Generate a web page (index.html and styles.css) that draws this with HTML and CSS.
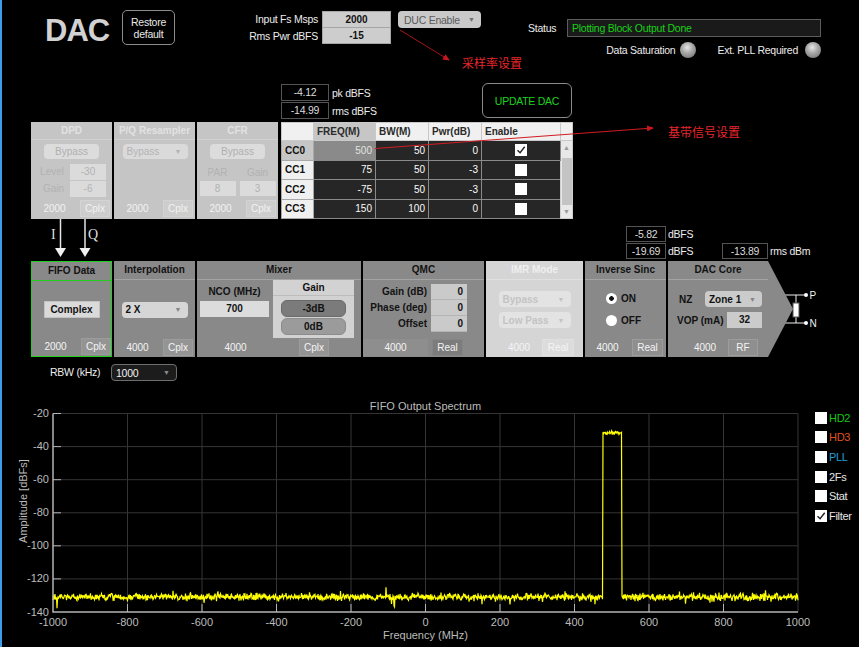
FILE: index.html
```html
<!DOCTYPE html>
<html lang="zh">
<head>
  <meta charset="UTF-8">
  <title>DAC</title>
  <link rel="stylesheet" href="styles.css">
</head>
<body>
  <!-- 顶部：标题、采样率、状态 -->
  <div class="top">
    <div class="title">DAC</div>
    <div class="restore">Restore<br>default</div>
    <div class="fs-group">
      <span class="lbl">Input Fs Msps</span>
      <span class="num-box">2000</span>
      <span class="lbl">Rms Pwr dBFS</span>
      <span class="num-box second">-15</span>
    </div>
    <div class="select duc"><span>DUC Enable</span><span class="caret">&#9660;</span></div>
    <div class="status-area">
      <div class="status-row">
        <span class="status-lbl">Status</span>
        <div class="status-box">Plotting Block Output Done</div>
      </div>
      <div class="led-row">
        <span>Data Saturation</span><span class="led"></span>
        <span class="led-lbl">Ext. PLL Required</span><span class="led last"></span>
      </div>
    </div>
  </div>

  <!-- 峰值 / 均方根 -->
  <div class="meas-top">
    <div class="pk">
      <span class="vbox">-4.12</span><span>pk dBFS</span>
      <span class="vbox">-14.99</span><span>rms dBFS</span>
    </div>
    <div class="update">UPDATE DAC</div>
  </div>

  <!-- 上排：DPD / 重采样 / CFR + 载波表 -->
  <div class="upper">
    <div class="blk dis">
      <div class="hd">DPD</div>
      <div class="bd">
        <div class="btn-dis">Bypass</div>
        <div class="lg-grid">
          <span class="r">Level</span><span class="inp-dis">-30</span>
          <span class="r">Gain</span><span class="inp-dis">-6</span>
        </div>
      </div>
      <div class="ft"><span class="a">2000</span><span class="b">Cplx</span></div>
    </div>
    <div class="blk dis">
      <div class="hd">P/Q Resampler</div>
      <div class="bd">
        <div class="select pq"><span>Bypass</span><span class="caret">&#9660;</span></div>
      </div>
      <div class="ft"><span class="a">2000</span><span class="b">Cplx</span></div>
    </div>
    <div class="blk dis">
      <div class="hd">CFR</div>
      <div class="bd">
        <div class="btn-dis">Bypass</div>
        <div class="pg-grid">
          <span>PAR</span><span>Gain</span>
          <span class="inp-dis">8</span><span class="inp-dis">3</span>
        </div>
      </div>
      <div class="ft"><span class="a">2000</span><span class="b">Cplx</span></div>
    </div>

    <table class="cc">
      <colgroup>
        <col class="w-rh"><col class="w-freq"><col class="w-bw"><col class="w-pwr"><col class="w-en"><col class="w-sb">
      </colgroup>
      <tr class="hrow"><th></th><th class="sel">FREQ(M)</th><th>BW(M)</th><th>Pwr(dB)</th><th>Enable</th><th></th></tr>
      <tr>
        <th class="rh sel">CC0</th><td class="fsel">500</td><td>50</td><td>0</td>
        <td class="en"><span class="chk"><svg width="12" height="12" viewBox="0 0 12 12"><path d="M2.5 6.2l2.6 2.6 4.6-6" fill="none" stroke="#222" stroke-width="1.4"/></svg></span></td>
        <td class="scroll" rowspan="4">
          <div class="scroll-in"><span class="up">&#9650;</span><span class="thumb"></span><span class="dn">&#9660;</span></div>
        </td>
      </tr>
      <tr><th class="rh">CC1</th><td>75</td><td>50</td><td>-3</td><td class="en"><span class="chk"></span></td></tr>
      <tr><th class="rh">CC2</th><td>-75</td><td>50</td><td>-3</td><td class="en"><span class="chk"></span></td></tr>
      <tr><th class="rh">CC3</th><td>150</td><td>100</td><td>0</td><td class="en"><span class="chk"></span></td></tr>
    </table>
  </div>

  <!-- I/Q 箭头与输出功率 -->
  <div class="iq-row">
    <svg class="iq" width="81" height="42" viewBox="0 0 81 42">
      <line x1="29.5" y1="0" x2="29.5" y2="30" stroke="#e4e4e4" stroke-width="1.5"/>
      <polygon points="24,29 35,29 29.5,38" fill="#f0f0f0"/>
      <line x1="54" y1="0" x2="54" y2="30" stroke="#e4e4e4" stroke-width="1.5"/>
      <polygon points="48.5,29 59.5,29 54,38" fill="#f0f0f0"/>
      <text x="20" y="20">I</text>
      <text x="57" y="20">Q</text>
    </svg>
    <div class="side-meas">
      <span class="vbox">-5.82</span><span>dBFS</span><span></span><span></span>
      <span class="vbox">-19.69</span><span>dBFS</span><span class="vbox">-13.89</span><span>rms dBm</span>
    </div>
  </div>

  <!-- 信号链 -->
  <div class="chain">
    <div class="blk fifo">
      <div class="hd">FIFO Data</div>
      <div class="bd"><div class="btn-lt">Complex</div></div>
      <div class="ft"><span class="a">2000</span><span class="b">Cplx</span></div>
    </div>
    <div class="blk">
      <div class="hd">Interpolation</div>
      <div class="bd"><div class="select interp"><span>2 X</span><span class="caret">&#9660;</span></div></div>
      <div class="ft"><span class="a">4000</span><span class="b">Cplx</span></div>
    </div>
    <div class="blk mixer">
      <div class="hd">Mixer</div>
      <div class="bd">
        <div class="nco">
          <span class="nco-lbl">NCO (MHz)</span>
          <span class="inp-lt">700</span>
        </div>
        <div class="gain">
          <div class="gain-hd">Gain</div>
          <div class="pill dark">-3dB</div>
          <div class="pill">0dB</div>
        </div>
      </div>
      <div class="ft"><span class="a">4000</span><span class="b">Cplx</span></div>
    </div>
    <div class="blk qmc">
      <div class="hd">QMC</div>
      <div class="bd">
        <span class="q-lbl">Gain (dB)</span><span class="q-inp">0</span>
        <span class="q-lbl">Phase (deg)</span><span class="q-inp">0</span>
        <span class="q-lbl">Offset</span><span class="q-inp">0</span>
      </div>
      <div class="ft"><span class="a">4000</span><span class="b">Real</span></div>
    </div>
    <div class="blk imr">
      <div class="hd">IMR Mode</div>
      <div class="bd">
        <div class="select imr-sel"><span>Bypass</span><span class="caret">&#9660;</span></div>
        <div class="select imr-sel"><span>Low Pass</span><span class="caret">&#9660;</span></div>
      </div>
      <div class="ft"><span class="a">4000</span><span class="b">Real</span></div>
    </div>
    <div class="blk sinc">
      <div class="hd">Inverse Sinc</div>
      <div class="bd">
        <div class="radios">
          <div class="radio-row"><span class="radio on"></span>ON</div>
          <div class="radio-row"><span class="radio"></span>OFF</div>
        </div>
      </div>
      <div class="ft"><span class="a">4000</span><span class="b">Real</span></div>
    </div>
    <div class="blk core">
      <div class="hd">DAC Core</div>
      <div class="bd">
        <div class="core-row"><span class="nz">NZ</span><div class="select zone"><span>Zone 1</span><span class="caret">&#9660;</span></div></div>
        <div class="core-row"><span>VOP (mA)</span><span class="inp-lt vop">32</span></div>
      </div>
      <div class="ft"><span class="a">4000</span><span class="b">RF</span></div>
    </div>
    <svg class="load" width="40" height="96" viewBox="0 0 40 96">
      <path d="M0 34H21M0 62H21M11 34V62" stroke="#f0f0f0" stroke-width="1" fill="none"/>
      <rect x="8" y="42" width="6" height="14" fill="#fff" stroke="#555" stroke-width="1"/>
      <circle cx="21" cy="34" r="2" fill="#fff"/>
      <circle cx="21" cy="62" r="2" fill="#fff"/>
      <text x="24.5" y="38">P</text>
      <text x="24.5" y="66">N</text>
    </svg>
  </div>

  <!-- RBW -->
  <div class="rbw">
    <span class="rbw-lbl">RBW (kHz)</span>
    <div class="select sel-dark"><span>1000</span><span class="caret">&#9660;</span></div>
  </div>

  <!-- 频谱图 -->
  <div class="chart">
    <svg class="plot" width="815" height="249" viewBox="0 398 815 249">
      <text class="p-title" x="425.5" y="410">FIFO Output Spectrum</text>
      <path class="grid" d="M53 413.5H798M53 446.6H798M53 479.7H798M53 512.8H798M53 545.8H798M53 578.9H798M127.5 413.5V612M202 413.5V612M276.5 413.5V612M351 413.5V612M425.5 413.5V612M500 413.5V612M574.5 413.5V612M649 413.5V612M723.5 413.5V612M798 413.5V612"/>
      <polyline id="trace" class="trace" points=""/>
      <path class="axis" d="M53 413.5V612H798"/>
      <path class="ticks" d="M53 413.5h8M53 446.6h8M53 479.7h8M53 512.8h8M53 545.8h8M53 578.9h8M127.5 612v-8M202 612v-8M276.5 612v-8M351 612v-8M425.5 612v-8M500 612v-8M574.5 612v-8M649 612v-8M723.5 612v-8"/>
      <g class="ylab">
        <text x="49" y="417">-20</text>
        <text x="49" y="450.1">-40</text>
        <text x="49" y="483.2">-60</text>
        <text x="49" y="516.3">-80</text>
        <text x="49" y="549.3">-100</text>
        <text x="49" y="582.4">-120</text>
        <text x="49" y="615.5">-140</text>
      </g>
      <g class="xlab">
        <text x="53" y="626">-1000</text>
        <text x="127.5" y="626">-800</text>
        <text x="202" y="626">-600</text>
        <text x="276.5" y="626">-400</text>
        <text x="351" y="626">-200</text>
        <text x="425.5" y="626">0</text>
        <text x="500" y="626">200</text>
        <text x="574.5" y="626">400</text>
        <text x="649" y="626">600</text>
        <text x="723.5" y="626">800</text>
        <text x="798" y="626">1000</text>
      </g>
      <text class="ax-t" x="425.5" y="639">Frequency (MHz)</text>
      <text class="ax-t" x="27" y="501" transform="rotate(-90 27 501)">Amplitude [dBFs]</text>
    </svg>
    <div class="legend">
      <div class="lg"><span class="box"></span><span class="c-hd2">HD2</span></div>
      <div class="lg"><span class="box"></span><span class="c-hd3">HD3</span></div>
      <div class="lg"><span class="box"></span><span class="c-pll">PLL</span></div>
      <div class="lg"><span class="box"></span><span>2Fs</span></div>
      <div class="lg"><span class="box"></span><span>Stat</span></div>
      <div class="lg"><span class="box"><svg width="12" height="12" viewBox="0 0 12 12"><path d="M2.5 6.2l2.6 2.6 4.6-6" fill="none" stroke="#222" stroke-width="1.4"/></svg></span><span>Filter</span></div>
    </div>
  </div>

  <!-- 标注 -->
  <svg class="notes" width="859" height="647" viewBox="0 0 859 647">
    <defs>
      <marker id="ah" markerWidth="7" markerHeight="6" refX="6" refY="3" orient="auto">
        <path d="M0 0L7 3L0 6z" fill="#c8161c"/>
      </marker>
    </defs>
    <line x1="400" y1="30" x2="449" y2="60" stroke="#a81418" stroke-width="1" marker-end="url(#ah)"/>
    <line x1="375" y1="148.5" x2="653" y2="128" stroke="#d01c22" stroke-width="1" marker-end="url(#ah)"/>
  </svg>
  <span class="note n1">采样率设置</span>
  <span class="note n2">基带信号设置</span>

  <script src="script.js"></script>
</body>
</html>
```

FILE: styles.css
```css
/* 基础 */
* {
  box-sizing: border-box;
}
html, body {
  margin: 0;
  padding: 0;
}
body {
  position: relative;
  width: 859px;
  height: 647px;
  overflow: hidden;
  background: #000;
  box-shadow: inset 2px 0 0 #3d9de8;
  color: #ececec;
  font-family: "Liberation Sans", Arial, sans-serif;
  font-size: 10.5px;
  letter-spacing: -0.25px;
}

/* 顶部 */
.top {
  display: flex;
  align-items: flex-start;
  height: 83px;
}
.title {
  width: 77px;
  margin: 15px 0 0 45px;
  font-size: 31px;
  line-height: 31px;
  font-weight: bold;
  color: #d2d2d2;
  letter-spacing: -1px;
}
.restore {
  width: 53px;
  height: 35px;
  margin-top: 10px;
  border: 1px solid #8c8c8c;
  border-radius: 5px;
  display: flex;
  align-items: center;
  justify-content: center;
  text-align: center;
  line-height: 12px;
  color: #e8e8e8;
}
.fs-group {
  display: grid;
  grid-template-columns: 80px 69px;
  grid-template-rows: 17px 16px;
  column-gap: 4px;
  margin: 11px 0 0 63px;
}
.fs-group .lbl {
  text-align: right;
  line-height: 17px;
}
.num-box {
  background: #cdcdcd;
  border: 1px solid #a6a6a6;
  color: #111;
  font-size: 10px;
  font-weight: bold;
  letter-spacing: 0;
  text-align: center;
  line-height: 15px;
}
.num-box.second {
  border-top: none;
}

/* 下拉框 */
.select {
  display: flex;
  justify-content: space-between;
  align-items: center;
  border-radius: 4px;
  padding: 0 6px 0 4px;
}
.caret {
  font-size: 7px;
  letter-spacing: 0;
}
.duc {
  width: 83px;
  height: 17px;
  margin: 11px 0 0 7px;
  padding-left: 6px;
  background: #c9c9c9;
  color: #5a5a5a;
}
.duc .caret {
  color: #6e6e6e;
}

/* 状态 */
.status-area {
  width: 293px;
  margin: 19px 0 0 47px;
}
.status-row {
  display: flex;
  align-items: center;
  height: 18px;
}
.status-lbl {
  width: 39px;
}
.status-box {
  width: 254px;
  height: 18px;
  padding-left: 4px;
  background: #1a1a1a;
  border: 1px solid #5c5c5c;
  color: #18d018;
  line-height: 16px;
}
.led-row {
  display: flex;
  align-items: center;
  justify-content: flex-end;
  height: 16px;
  margin-top: 5px;
}
.led {
  width: 16px;
  height: 16px;
  margin-left: 5px;
  border-radius: 50%;
  background: radial-gradient(circle at 45% 35%, #e6e6e6 0, #a9a9a9 40%, #666 100%);
}
.led.last {
  margin-left: 7px;
}
.led-lbl {
  margin-left: 21px;
}

/* 峰值 / 均方根 */
.meas-top {
  display: flex;
  height: 39px;
  padding-left: 281px;
}
.pk {
  width: 201px;
  padding-top: 1px;
  display: grid;
  grid-template-columns: 48px auto;
  grid-template-rows: 17px 17px;
  row-gap: 1px;
  column-gap: 3px;
  align-items: center;
  align-content: start;
}
.vbox {
  height: 17px;
  border: 1px solid #545454;
  color: #dcdcdc;
  text-align: center;
  line-height: 15px;
}
.update {
  width: 90px;
  height: 35px;
  border: 1px solid #8a8a8a;
  border-radius: 6px;
  display: flex;
  align-items: center;
  justify-content: center;
  color: #1ed21e;
}

/* 模块 */
.upper {
  display: flex;
  gap: 2px;
  height: 97px;
  padding-left: 31px;
}
.chain {
  display: flex;
  gap: 2px;
  height: 96px;
  padding-left: 31px;
}
.blk {
  width: 81px;
  display: flex;
  flex-direction: column;
  background: #898989;
  color: #121212;
  font-size: 10px;
  letter-spacing: 0;
}
.blk .hd {
  height: 19px;
  line-height: 18px;
  text-align: center;
  font-weight: bold;
  border-bottom: 1px solid #a3a3a3;
}
.blk .bd {
  flex: 1;
  display: flex;
  flex-direction: column;
  align-items: center;
  justify-content: center;
}
.blk .ft {
  display: flex;
  height: 17px;
  margin-bottom: 1px;
  color: #f4f4f4;
}
.ft span {
  text-align: center;
  line-height: 17px;
}
.ft .a {
  width: 47px;
}
.ft .b {
  width: 30px;
  margin-left: 2px;
  line-height: 15px;
  background: #949494;
  border: 1px solid #9c9c9c;
}

/* 上排（禁用） */
.dis {
  background: #c5c5c5;
  color: #b2b2b2;
}
.dis .hd {
  height: 18px;
  line-height: 17px;
  color: #e2e2e2;
  border-bottom-color: #d0d0d0;
}
.dis .bd {
  justify-content: flex-start;
  padding-top: 4px;
}
.dis .ft {
  margin-bottom: 2px;
  color: #f2f2f2;
}
.dis .ft .b {
  background: #cdcdcd;
  border-color: #d3d3d3;
}
.btn-dis {
  width: 55px;
  height: 15px;
  line-height: 15px;
  border-radius: 4px;
  background: #dcdcdc;
  color: #b0b0b0;
  text-align: center;
}
.lg-grid {
  align-self: flex-start;
  display: grid;
  grid-template-columns: 33px 36px;
  grid-auto-rows: 16px;
  column-gap: 6px;
  row-gap: 1px;
  margin-top: 5px;
  line-height: 16px;
}
.r {
  text-align: right;
}
.inp-dis {
  background: #dbdbdb;
  text-align: center;
}
.pg-grid {
  display: grid;
  grid-template-columns: 36px 36px;
  grid-template-rows: 17px 15px;
  column-gap: 4px;
  margin-top: 5px;
  text-align: center;
  line-height: 17px;
}
.pg-grid .inp-dis {
  line-height: 15px;
}
.pq {
  width: 65px;
  height: 15px;
  margin-left: 1px;
  background: #dadada;
  color: #b3b3b3;
}

/* 载波表 */
.cc {
  width: 291px;
  height: 97px;
  margin-left: 1px;
  border-collapse: collapse;
  table-layout: fixed;
  background: #262626;
  border: 1px solid #d6d6d6;
  font-size: 10px;
  letter-spacing: 0;
}
.w-rh { width: 32px; }
.w-freq { width: 62px; }
.w-bw { width: 53px; }
.w-pwr { width: 53px; }
.w-en { width: 79px; }
.w-sb { width: 12px; }
.cc th, .cc td {
  padding: 0 3px;
  border: 1px solid #8a8a8a;
  white-space: nowrap;
}
.cc .hrow th {
  height: 18px;
  background: #f0f0f0;
  color: #2a2a2a;
  text-align: left;
  border-color: #c9c9c9;
}
.cc .hrow th.sel {
  background: #c6c6c6;
}
.cc .rh {
  background: #f0f0f0;
  color: #111;
  text-align: left;
  border-color: #a8a8a8;
}
.cc .rh.sel {
  background: #c6c6c6;
}
.cc td {
  color: #fafafa;
  text-align: right;
}
.cc td.fsel {
  background: #8a8a8a;
  color: #e2e2e2;
}
.cc td.en {
  text-align: center;
}
.cc td.scroll {
  padding: 0;
  background: #e8e8e8;
  border-color: #cfcfcf;
  vertical-align: top;
}
.scroll-in {
  height: 77px;
  display: flex;
  flex-direction: column;
  align-items: center;
  color: #9a9a9a;
  font-size: 7px;
}
.scroll-in .up {
  height: 17px;
  line-height: 14px;
}
.scroll-in .thumb {
  flex: 1;
  width: 10px;
  background: #c4c4c4;
}
.scroll-in .dn {
  height: 13px;
  line-height: 13px;
}
.chk {
  display: inline-block;
  width: 12px;
  height: 12px;
  background: #fff;
  vertical-align: middle;
}
.chk svg {
  display: block;
}

/* I/Q 与输出功率 */
.iq-row {
  display: flex;
  height: 42px;
  padding-left: 31px;
}
.iq text {
  font-family: "Liberation Serif", "Times New Roman", serif;
  font-size: 14px;
  fill: #dedede;
}
.side-meas {
  display: grid;
  grid-template-columns: 40px 52px 46px auto;
  grid-template-rows: 16px 16px;
  column-gap: 2px;
  row-gap: 1px;
  margin: 7px 0 0 514px;
  align-items: center;
}
.side-meas .vbox {
  height: 16px;
  line-height: 14px;
}

/* 信号链 */
.fifo {
  border: 1px solid #1fd01f;
}
.fifo .hd {
  border-bottom-color: #1fd01f;
}
.btn-lt {
  width: 56px;
  height: 17px;
  line-height: 15px;
  background: #dadada;
  border: 1px solid #c2c2c2;
  font-weight: bold;
  text-align: center;
}
.interp {
  width: 66px;
  height: 16px;
  background: #d6d6d6;
  font-weight: bold;
}
.interp .caret, .zone .caret {
  color: #858585;
}
.mixer {
  width: 164px;
}
.mixer .bd {
  flex-direction: row;
  align-items: flex-start;
  justify-content: flex-start;
  padding-left: 3px;
}
.nco {
  width: 69px;
  display: flex;
  flex-direction: column;
  align-items: center;
}
.nco-lbl {
  margin-top: 6px;
  line-height: 12px;
  font-weight: bold;
}
.inp-lt {
  height: 16px;
  line-height: 16px;
  background: #dcdcdc;
  font-weight: bold;
  text-align: center;
}
.nco .inp-lt {
  width: 69px;
  margin-top: 3px;
}
.gain {
  width: 81px;
  height: 58px;
  margin-left: 4px;
  background: #d2d2d2;
  display: flex;
  flex-direction: column;
  align-items: center;
}
.gain-hd {
  width: 100%;
  height: 16px;
  line-height: 15px;
  text-align: center;
  font-weight: bold;
  border-bottom: 1px solid #bcbcbc;
}
.pill {
  width: 65px;
  height: 17px;
  margin-top: 1px;
  line-height: 15px;
  border-radius: 6px;
  background: #9b9b9b;
  border: 1px solid #8c8c8c;
  text-align: center;
  font-weight: bold;
}
.pill.dark {
  margin-top: 4px;
  background: #7b7b7b;
  border-color: #6a6a6a;
}
.mixer .ft {
  padding-left: 16px;
}
.mixer .ft .a {
  width: 45px;
}
.mixer .ft .b {
  margin-left: 41px;
}
.qmc {
  width: 121px;
}
.qmc .bd {
  display: grid;
  grid-template-columns: 64px 36px;
  column-gap: 4px;
  align-content: start;
  justify-content: start;
  padding-top: 4px;
}
.q-lbl {
  text-align: right;
  font-weight: bold;
  line-height: 16px;
}
.q-inp {
  height: 16px;
  padding-right: 4px;
  line-height: 16px;
  background: #cacaca;
  border-bottom: 1px solid #b4b4b4;
  text-align: right;
  font-weight: bold;
}
.qmc .ft .a {
  width: 65px;
  background: #8e8e8e;
}
.qmc .ft .b {
  width: 31px;
  margin-left: 4px;
  background: #7c7c7c;
  border-color: #858585;
}
.imr {
  width: 97px;
  background: #d5d5d5;
}
.imr .hd {
  color: #efefef;
  border-bottom-color: #e0e0e0;
}
.imr-sel {
  width: 72px;
  height: 16px;
  background: #e3e3e3;
  color: #c3c3c3;
  font-weight: bold;
}
.imr-sel + .imr-sel {
  margin-top: 5px;
}
.imr .ft {
  padding-left: 11px;
}
.imr .ft .a {
  width: 44px;
}
.imr .ft .b {
  width: 32px;
  margin-left: 1px;
  background: #dcdcdc;
  border-color: #e0e0e0;
}
.radios {
  display: flex;
  flex-direction: column;
  margin-right: 4px;
}
.radio-row {
  display: flex;
  align-items: center;
  height: 22px;
  font-weight: bold;
}
.radio {
  width: 11px;
  height: 11px;
  margin-right: 4px;
  border-radius: 50%;
  background: #fff;
}
.radio.on {
  background: radial-gradient(circle, #111 0, #111 2px, #fff 2.6px);
}
.sinc .ft .a {
  width: 45px;
}
.sinc .ft .b {
  width: 31px;
  background: #8f8f8f;
}
.core {
  width: 125px;
  clip-path: polygon(0 0, 100px 0, 125px 50%, 100px 100%, 0 100%);
}
.core .hd, .core .bd, .core .ft {
  width: 100px;
}
.core .bd {
  align-items: stretch;
}
.core-row {
  display: flex;
  justify-content: space-between;
  align-items: center;
  height: 16px;
  padding: 0 6px 0 9px;
  font-weight: bold;
}
.core-row + .core-row {
  margin-top: 5px;
}
.nz {
  margin-left: 2px;
}
.zone {
  width: 57px;
  height: 16px;
  background: #cbcbcb;
}
.vop {
  width: 35px;
  background: #cbcbcb;
}
.core .ft {
  padding-left: 15px;
}
.core .ft .a {
  width: 44px;
}
.core .ft .b {
  margin-left: 1px;
  background: #8f8f8f;
}
.load {
  display: block;
  margin-left: -10px;
}
.load text {
  font-size: 10px;
  fill: #f0f0f0;
}

/* RBW */
.rbw {
  display: flex;
  align-items: flex-start;
  height: 41px;
  padding: 7px 0 0 50px;
}
.rbw-lbl {
  width: 61px;
  line-height: 17px;
}
.sel-dark {
  width: 66px;
  height: 17px;
  background: #1c1c1c;
  border: 1px solid #6e6e6e;
  color: #f0f0f0;
}
.sel-dark .caret {
  color: #8a8a8a;
}

/* 频谱图 */
.chart {
  display: flex;
  height: 249px;
}
.plot {
  display: block;
}
.plot text {
  font-family: "Liberation Sans", Arial, sans-serif;
  font-size: 11px;
  letter-spacing: 0;
  fill: #bcbcbc;
}
.plot .p-title, .plot .ax-t, .xlab text {
  text-anchor: middle;
}
.ylab text {
  text-anchor: end;
}
.grid {
  fill: none;
  stroke: #343434;
  stroke-width: 1;
}
.axis {
  fill: none;
  stroke: #b4b4b4;
  stroke-width: 1.5;
}
.ticks {
  fill: none;
  stroke: #b4b4b4;
  stroke-width: 1;
}
.trace {
  fill: none;
  stroke: #ffff00;
  stroke-width: 1.2;
}
.legend {
  padding-top: 10px;
}
.lg {
  display: flex;
  align-items: center;
  height: 19.6px;
  font-size: 11px;
  letter-spacing: -0.3px;
  color: #e6e6e6;
}
.box {
  width: 12px;
  height: 12px;
  margin-right: 2px;
  background: #fff;
}
.box svg {
  display: block;
}
.c-hd2 { color: #14c814; }
.c-hd3 { color: #e0501e; }
.c-pll { color: #1ea0d8; }

/* 标注 */
.notes {
  position: absolute;
  left: 0;
  top: 0;
  pointer-events: none;
}
.note {
  position: absolute;
  color: #e8262c;
  font-family: "Noto Sans CJK SC", sans-serif;
  font-size: 12px;
  line-height: 14px;
  letter-spacing: 0;
}
.n1 {
  left: 462px;
  top: 56px;
}
.n2 {
  left: 668px;
  top: 125px;
}
```

FILE: script.js
```js
// 频谱曲线：噪底 + CC0 载波
(function () {
  var seed = 12345;
  function rand() {
    seed = (seed * 16807) % 2147483647;
    return seed / 2147483647;
  }
  function noise(amp) {
    var n = rand() + rand() + rand() - 1.5;
    if (rand() < 0.06) n *= 2.4;
    return n * amp;
  }
  var pts = [];
  for (var x = 53; x <= 798; x += 0.5) {
    var y = (x > 602.5 && x < 622) ? 433 + noise(1.6) : 597 + noise(3.4);
    pts.push(x + ',' + y.toFixed(1));
  }
  document.getElementById('trace').setAttribute('points', pts.join(' '));
})();
```
